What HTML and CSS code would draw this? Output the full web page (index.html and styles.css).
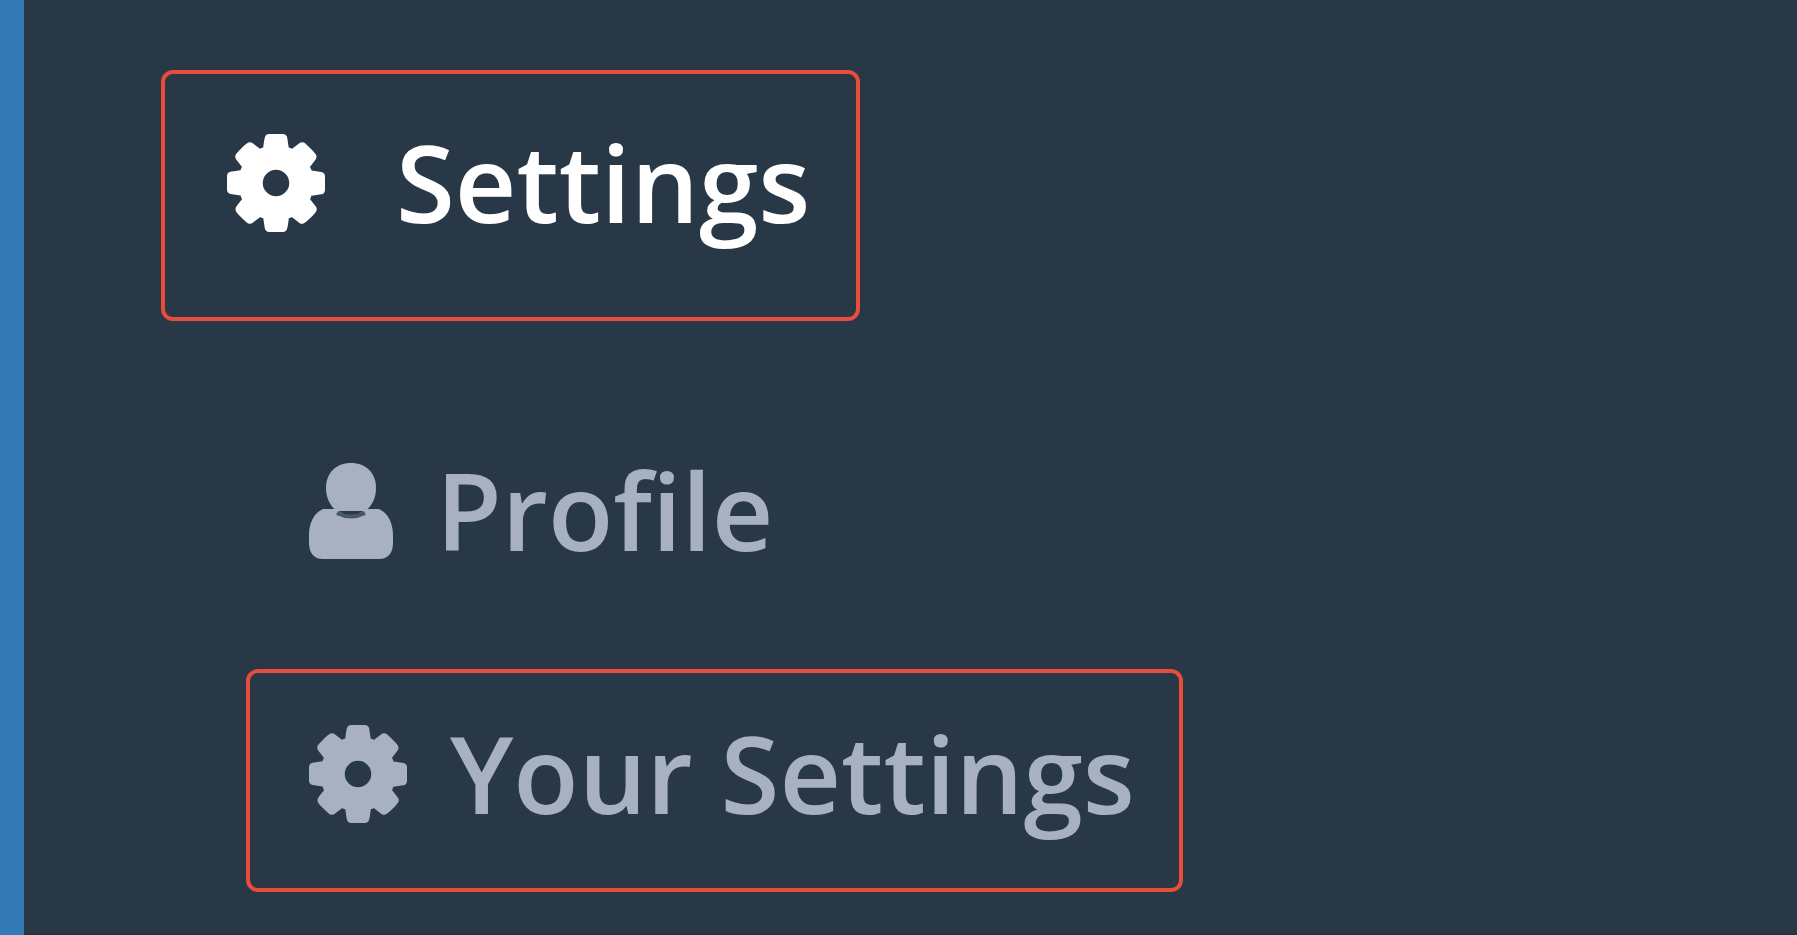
FILE: index.html
```html
<!DOCTYPE html>
<html lang="en">
<head>
<meta charset="utf-8">
<title>Settings</title>
<link rel="stylesheet" href="styles.css">
</head>
<body>
<svg class="sprite" aria-hidden="true">
  <symbol id="cog" viewBox="90 90 1612 1612">
    <path stroke="currentColor" stroke-width="76" stroke-linejoin="round" d="M1152 896q0-106-75-181t-181-75-181 75-75 181 75 181 181 75 181-75 75-181zm512-109v222q0 12-8 23t-20 13l-185 28q-19 54-39 91 35 50 107 138 10 12 10 25t-9 23q-27 37-99 108t-94 71q-12 0-26-9l-138-108q-44 23-91 38-16 136-29 186-7 28-36 28h-222q-14 0-24.5-8.5t-11.5-21.5l-28-184q-49-16-90-37l-141 107q-10 9-25 9-14 0-25-11-126-114-165-168-7-10-7-23 0-12 8-23 15-21 51-66.5t54-70.5q-27-50-41-99l-183-27q-13-2-21-12.5t-8-23.5v-222q0-12 8-23t19-13l186-28q14-46 39-92-40-57-107-138-10-12-10-24 0-10 9-23 26-36 98.5-107.5t94.5-71.5q13 0 26 10l138 107q44-23 91-38 16-136 29-186 7-28 36-28h222q14 0 24.5 8.5t11.5 21.5l28 184q49 16 90 37l142-107q9-9 24-9 13 0 25 10 129 119 165 170 7 8 7 22 0 12-8 23-15 21-51 66.5t-54 70.5q26 50 41 98l183 28q13 2 21 12.5t8 23.5z"/>
  </symbol>
  <symbol id="user" viewBox="0 0 84 96">
    <path d="M42 0C57 0 67 10 67 25C67 36 62 44 56 48H28C22 44 17 36 17 25C17 10 27 0 42 0Z"/>
    <path d="M14 46H27Q42 59 57 46H70C79 50 84 60 84 72V80C84 90 79 96 70 96H14C5 96 0 90 0 80V72C0 60 5 50 14 46Z"/>
    <path class="icon-crease" d="M28 50Q42 57 56 50"/>
  </symbol>
</svg>
<nav class="sidebar">
  <a class="item item-main boxed" href="#settings">
    <svg class="icon" aria-hidden="true"><use href="#cog"/></svg>
    <span>Settings</span>
  </a>
  <div class="submenu">
    <a class="item item-sub" href="#profile">
      <svg class="icon icon-user" aria-hidden="true"><use href="#user"/></svg>
      <span>Profile</span>
    </a>
    <a class="item item-sub boxed" href="#your-settings">
      <svg class="icon" aria-hidden="true"><use href="#cog"/></svg>
      <span>Your Settings</span>
    </a>
  </div>
</nav>
</body>
</html>
```
FILE: styles.css
```css
* {
  box-sizing: border-box;
}

body {
  margin: 0;
  background: #293846;
  font-family: "Open Sans", "Noto Sans", sans-serif;
  font-size: 107px;
  font-weight: 600;
  line-height: 128px;
}

.sprite {
  display: none;
}

.sidebar {
  display: flex;
  flex-direction: column;
  align-items: flex-start;
  min-height: 100vh;
  padding: 70px 0 40px 137px;
  border-left: 24px solid #337ab7;
  box-shadow: inset 0 -2px #28303f;
}

.item {
  display: flex;
  align-items: center;
  width: fit-content;
  border: 4px solid transparent;
  border-radius: 12px;
  color: #a7b1c2;
  text-decoration: none;
  white-space: nowrap;
}

.boxed {
  border-color: #e74c3c;
}

.item-main {
  gap: 71px;
  padding: 44px 46px 71px 62px;
  color: #fff;
}

.submenu {
  display: flex;
  flex-direction: column;
  gap: 91px;
  padding: 121px 0 0 85px;
}

.item-sub {
  gap: 43px;
  padding: 0 44px 0 59px;
}

.item-sub.boxed {
  padding-top: 36px;
  padding-bottom: 51px;
}

.icon {
  width: 98px;
  height: 98px;
  margin-top: 2px;
  fill: currentColor;
}

.icon-user {
  width: 84px;
  height: 96px;
}

.icon-crease {
  fill: none;
  stroke: #47566a;
  stroke-width: 4px;
}
```
